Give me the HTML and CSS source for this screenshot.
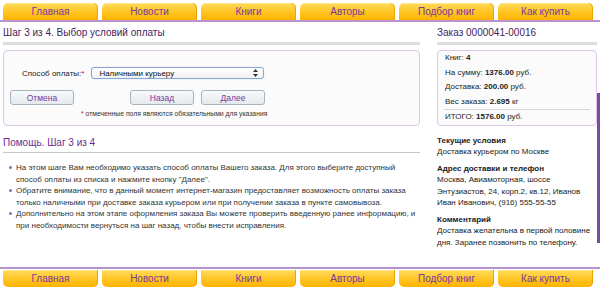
FILE: index.html
```html
<!DOCTYPE html>
<html lang="ru">
<head>
    <meta charset="UTF-8">
    <title>Оформление заказа — шаг 3</title>
    <link rel="stylesheet" href="styles.css">
</head>
<body>
<div class="page">
    <nav class="tabs tabs-top">
        <a class="tab" href="#">Главная</a>
        <a class="tab" href="#">Новости</a>
        <a class="tab" href="#">Книги</a>
        <a class="tab" href="#">Авторы</a>
        <a class="tab" href="#">Подбор книг</a>
        <a class="tab" href="#">Как купить</a>
    </nav>

    <main class="content">
        <div class="col-main">
            <h2 class="heading">Шаг 3 из 4. Выбор условий оплаты</h2>
            <form class="panel step-form">
                <div class="field">
                    <label class="field-label">Способ оплаты:<span class="req">*</span></label>
                    <div class="select">
                        <span>Наличными курьеру</span>
                        <svg class="select-arrows" width="5" height="8" viewBox="0 0 5 8"><path d="M2.5 0 L5 3 L0 3 Z M2.5 8 L5 5 L0 5 Z" fill="#333"/></svg>
                    </div>
                </div>
                <div class="actions">
                    <button type="button" class="btn btn-cancel">Отмена</button>
                    <button type="button" class="btn">Назад</button>
                    <button type="button" class="btn">Далее</button>
                </div>
                <p class="note"><span class="req">*</span> отмеченные поля являются обязательными для указания</p>
            </form>

            <h2 class="heading heading-help">Помощь. Шаг 3 из 4</h2>
            <ul class="help">
                <li>На этом шаге Вам необходимо указать способ оплаты Вашего заказа. Для этого выберите доступный способ оплаты из списка и нажмите кнопку "Далее".</li>
                <li>Обратите внимание, что в данный момент интернет-магазин предоставляет возможность оплаты заказа только наличными при доставке заказа курьером или при получении заказа в пункте самовывоза.</li>
                <li>Дополнительно на этом этапе оформления заказа Вы можете проверить введенную ранее информацию, и при необходимости вернуться на шаг назад, чтобы внести исправления.</li>
            </ul>
        </div>

        <aside class="col-side">
            <h2 class="heading">Заказ 0000041-00016</h2>
            <div class="panel summary">
                <div class="row">Книг: <b>4</b></div>
                <div class="row">На сумму: <b>1376.00</b> руб.</div>
                <div class="row">Доставка: <b>200.00</b> руб.</div>
                <div class="row">Вес заказа: <b>2.695</b> кг</div>
                <div class="row total">ИТОГО: <b>1576.00</b> руб.</div>
            </div>
            <div class="info">
                <div class="group">
                    <h3>Текущие условия</h3>
                    <p>Доставка курьером по Москве</p>
                </div>
                <div class="group">
                    <h3>Адрес доставки и телефон</h3>
                    <p>Москва, Авиамоторная, шоссе Энтузиастов, 24, корп.2, кв.12, Иванов Иван Иванович, (916) 555-55-55</p>
                </div>
                <div class="group">
                    <h3>Комментарий</h3>
                    <p>Доставка желательна в первой половине дня. Заранее позвонить по телефону.</p>
                </div>
            </div>
        </aside>
        <div class="scroll-mark"></div>
    </main>

    <nav class="tabs tabs-bottom">
        <a class="tab" href="#">Главная</a>
        <a class="tab" href="#">Новости</a>
        <a class="tab" href="#">Книги</a>
        <a class="tab" href="#">Авторы</a>
        <a class="tab" href="#">Подбор книг</a>
        <a class="tab" href="#">Как купить</a>
    </nav>
</div>
</body>
</html>
```

FILE: styles.css
```css
body {
    margin: 0;
    font-family: "Liberation Sans", Arial, sans-serif;
    background-color: #FFFFFF;
    color: #333333;
}
.page {
    width: 600px;
    height: 290px;
    display: flex;
    flex-direction: column;
    overflow: hidden;
}

/* Меню */
.tabs {
    display: flex;
    gap: 4px;
    padding: 0 7px 0 3px;
    width: 590px;
}
.tabs-top {
    padding-top: 3px;
    border-bottom: 2px solid #B992D2;
}
.tabs-bottom {
    border-top: 2px solid #B992D2;
    padding-top: 1px;
    padding-bottom: 3px;
}
.tab {
    flex: 1;
    height: 17px;
    line-height: 17px;
    text-align: center;
    font-size: 10px;
    color: #7A3A9C;
    text-decoration: none;
    background: linear-gradient(#FFDB5C, #FFC21E 60%, #FFB300);
    box-shadow: inset -1px 0 0 #E9A400, inset 0 1px 0 #FFE58A;
}
.tabs-top .tab {
    border-radius: 5px 5px 0 0;
}
.tabs-bottom .tab {
    border-radius: 0 0 5px 5px;
}

/* Контент */
.content {
    flex: 1;
    position: relative;
    display: flex;
    gap: 17px;
    padding: 0 3px;
}
.col-main {
    width: 417px;
}
.col-side {
    width: 160px;
}
.heading {
    margin: 5px 0 0;
    font-size: 10px;
    font-weight: normal;
    line-height: 12px;
    color: #3F1E5E;
    padding-bottom: 3px;
    border-bottom: 3px solid #DDDDDD;
}
.heading-help {
    margin-top: 11px;
    color: #6A2C8F;
    border-bottom: 1px solid #C6C6C6;
}
.panel {
    margin-top: 5px;
    border: 1px solid #DCC7EA;
    border-radius: 4px;
    background-color: #FBFBFB;
}

/* Форма */
.step-form {
    padding-top: 16px;
    box-sizing: border-box;
    height: 76px;
}
.field {
    display: flex;
    align-items: center;
    padding-left: 18px;
    gap: 7px;
    font-size: 8px;
}
.field-label {
    color: #222222;
}
.req {
    color: #E0001B;
}
.select {
    width: 159px;
    height: 10px;
    display: flex;
    align-items: center;
    justify-content: space-between;
    padding: 0 5px 0 7px;
    border: 1px solid #86A6D4;
    border-radius: 3px;
    background: linear-gradient(#FFFFFF, #F2F2F2);
    box-shadow: 0 0 1px #9DBBE6;
    color: #111111;
}
.actions {
    display: flex;
    gap: 7px;
    margin-top: 11px;
    padding-left: 6px;
}
.btn {
    width: 64px;
    height: 15px;
    padding: 0;
    font-family: inherit;
    font-size: 8.5px;
    color: #7A3A9C;
    border: 1px solid #A8B3BE;
    border-radius: 3px;
    background: linear-gradient(#F8FAFB, #E4E9ED);
}
.btn-cancel {
    margin-right: 49px;
}
.note {
    margin: 4px 0 0;
    padding-left: 77px;
    font-size: 6.8px;
    line-height: 9px;
    color: #333333;
}

/* Помощь */
.help {
    list-style: none;
    margin: 9px 0 0;
    padding: 0 0 0 13px;
    font-size: 8px;
    line-height: 11.5px;
    color: #333333;
}
.help li {
    position: relative;
}
.help li::before {
    content: "";
    position: absolute;
    left: -7px;
    top: 4px;
    width: 3px;
    height: 3px;
    border-radius: 50%;
    background-color: #9865BE;
}

/* Заказ */
.summary {
    padding: 0 6px;
    font-size: 8px;
    line-height: 14.5px;
    color: #222222;
}
.summary .total {
    border-top: 1px solid #D6D6D6;
    padding-left: 1px;
}
.summary .row {
    padding-left: 1px;
}
.info {
    margin-top: 9px;
    font-size: 8px;
    line-height: 11.5px;
    color: #222222;
}
.group + .group {
    margin-top: 5px;
}
.info h3 {
    margin: 0;
    font-size: 8px;
    font-weight: bold;
}
.info p {
    margin: 0;
}
.scroll-mark {
    position: absolute;
    right: 0;
    top: 71px;
    width: 3px;
    height: 150px;
    background-color: #7C4A9E;
}
```
